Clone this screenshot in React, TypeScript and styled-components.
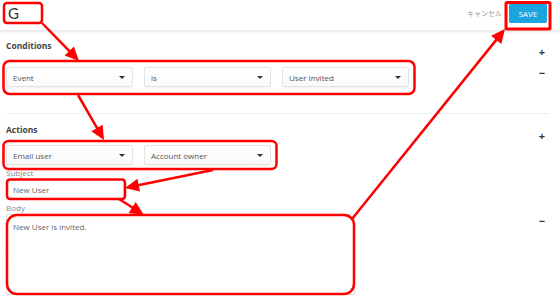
import React from 'react';
import styled, { createGlobalStyle } from 'styled-components';

const GlobalStyle = createGlobalStyle`
  html, body {
    margin: 0;
    padding: 0;
    background: #ffffff;
  }
  body {
    width: 560px;
    height: 298px;
    overflow: hidden;
    font-family: "Open Sans", "Noto Sans CJK JP", sans-serif;
  }
`;

const Page = styled.div`
  position: relative;
  width: 560px;
  height: 298px;
  background: #ffffff;
`;

const Header = styled.header`
  height: 30px;
  display: flex;
  align-items: center;
  justify-content: space-between;
  padding: 0 13px 0 8px;
  box-shadow: 0 2px 3px rgba(0, 0, 0, 0.1);
`;

const Logo = styled.div`
  font-family: "Lato", sans-serif;
  font-size: 15px;
  color: #333;
  margin-top: -4px;
`;

const HeaderActions = styled.div`
  display: flex;
  align-items: center;
  gap: 7px;
  margin-top: -4px;
`;

const Cancel = styled.span`
  font-family: "Noto Sans CJK JP", sans-serif;
  font-size: 7px;
  color: #999;
`;

const SaveButton = styled.button`
  width: 38px;
  height: 20px;
  border: none;
  border-radius: 2px;
  background: #1aa5df;
  color: #fff;
  font-family: "Open Sans", sans-serif;
  font-size: 8px;
  padding: 0;
`;

const Content = styled.main`
  padding: 0 11px 0 6px;
`;

const Section = styled.section<{ $top: number }>`
  display: grid;
  grid-template-columns: 1fr 14px;
  align-items: start;
  padding-top: ${({ $top }) => $top}px;
`;

const Title = styled.div`
  font-size: 8.5px;
  font-weight: 700;
  color: #444;
  height: 14px;
  line-height: 14px;
`;

const Control = styled.div<{ $top?: number }>`
  height: 14px;
  font-size: 11px;
  font-weight: 700;
  color: #333;
  line-height: 25px;
  text-align: center;
  margin-top: ${({ $top }) => $top ?? 0}px;
`;

const SelectRow = styled.div<{ $top: number }>`
  display: flex;
  gap: 11px;
  margin-top: ${({ $top }) => $top}px;
`;

const Select = styled.div`
  width: 127px;
  height: 20px;
  box-sizing: border-box;
  display: flex;
  align-items: center;
  justify-content: space-between;
  padding: 0 7px 0 6px;
  border: 1px solid #e4e4e4;
  border-radius: 2px;
  background: linear-gradient(#ffffff, #fafafa);
  box-shadow: 0 1px 1px rgba(0, 0, 0, 0.04);
  font-size: 8px;
  color: #555;
`;

const Caret = styled.span`
  width: 0;
  height: 0;
  border-left: 3px solid transparent;
  border-right: 3px solid transparent;
  border-top: 3px solid #333;
`;

const Divider = styled.hr`
  border: none;
  border-top: 1px solid #eeeeee;
  margin: 26px 0 0 0;
  grid-column: 1 / 3;
`;

const Field = styled.div`
  display: flex;
  flex-direction: column;
`;

const Label = styled.label<{ $top: number }>`
  display: block;
  height: 10px;
  font-size: 8px;
  color: #888;
  line-height: 10px;
  margin-top: ${({ $top }) => $top}px;
`;

const Input = styled.div`
  width: 118px;
  height: 20px;
  box-sizing: border-box;
  margin-top: 1px;
  padding: 0 6px;
  display: flex;
  align-items: center;
  border: 1px solid #dddddd;
  font-size: 8px;
  color: #666;
`;

const TextArea = styled.div`
  width: 349px;
  height: 81px;
  box-sizing: border-box;
  margin-top: 1px;
  padding: 6px 6px;
  border: 1px solid #dddddd;
  font-size: 8px;
  color: #666;
`;

const Overlay = styled.svg`
  position: absolute;
  left: 0;
  top: 0;
  pointer-events: none;
`;

const RED = '#ff0000';

const Arrow = ({ x1, y1, x2, y2 }: { x1: number; y1: number; x2: number; y2: number }) => {
  const dx = x2 - x1;
  const dy = y2 - y1;
  const len = Math.hypot(dx, dy);
  const ux = dx / len;
  const uy = dy / len;
  const head = 14;
  const half = 6.5;
  const bx = x2 - ux * head;
  const by = y2 - uy * head;
  const pts = `${x2},${y2} ${bx - uy * half},${by + ux * half} ${bx + uy * half},${by - ux * half}`;
  return (
    <g>
      <line x1={x1} y1={y1} x2={bx + ux * 2} y2={by + uy * 2} stroke={RED} strokeWidth={2.5} />
      <polygon points={pts} fill={RED} />
    </g>
  );
};

const Annotations = () => (
  <Overlay width={560} height={298} viewBox="0 0 560 298">
    <g fill="none" stroke={RED} strokeWidth={2.5}>
      <rect x={4} y={3} width={38} height={20} rx={3} />
      <rect x={506} y={2.5} width={44} height={26.5} rx={1} strokeWidth={3} />
      <rect x={3.5} y={61} width={411} height={33} rx={6} />
      <rect x={3.5} y={141} width={273} height={28} rx={5} />
      <rect x={7} y={179.5} width={118} height={19.5} rx={3} />
      <rect x={7} y={215} width={347} height={79} rx={10} />
    </g>
    <Arrow x1={42} y1={23} x2={79} y2={61} />
    <Arrow x1={78} y1={95} x2={104} y2={140} />
    <Arrow x1={213} y1={170} x2={125} y2={188} />
    <Arrow x1={119} y1={199} x2={144} y2={215} />
    <Arrow x1={352} y1={219} x2={505} y2={29} />
  </Overlay>
);

const Dropdown = ({ label }: { label: string }) => (
  <Select>
    <span>{label}</span>
    <Caret />
  </Select>
);

export default function App() {
  return (
    <Page>
      <GlobalStyle />
      <Header>
        <Logo>G</Logo>
        <HeaderActions>
          <Cancel>キャンセル</Cancel>
          <SaveButton>SAVE</SaveButton>
        </HeaderActions>
      </Header>
      <Content>
        <Section $top={9}>
          <Title>Conditions</Title>
          <Control>+</Control>
          <SelectRow $top={14}>
            <Dropdown label="Event" />
            <Dropdown label="is" />
            <Dropdown label="User Invited" />
          </SelectRow>
          <Control $top={7}>−</Control>
          <Divider />
        </Section>
        <Section $top={9}>
          <Title>Actions</Title>
          <Control>+</Control>
          <Field>
            <SelectRow $top={8}>
              <Dropdown label="Email user" />
              <Dropdown label="Account owner" />
            </SelectRow>
            <Label $top={3}>Subject</Label>
            <Input>New User</Input>
            <Label $top={4}>Body</Label>
            <TextArea>New User is invited.</TextArea>
          </Field>
          <Control $top={71}>−</Control>
        </Section>
      </Content>
      <Annotations />
    </Page>
  );
}
